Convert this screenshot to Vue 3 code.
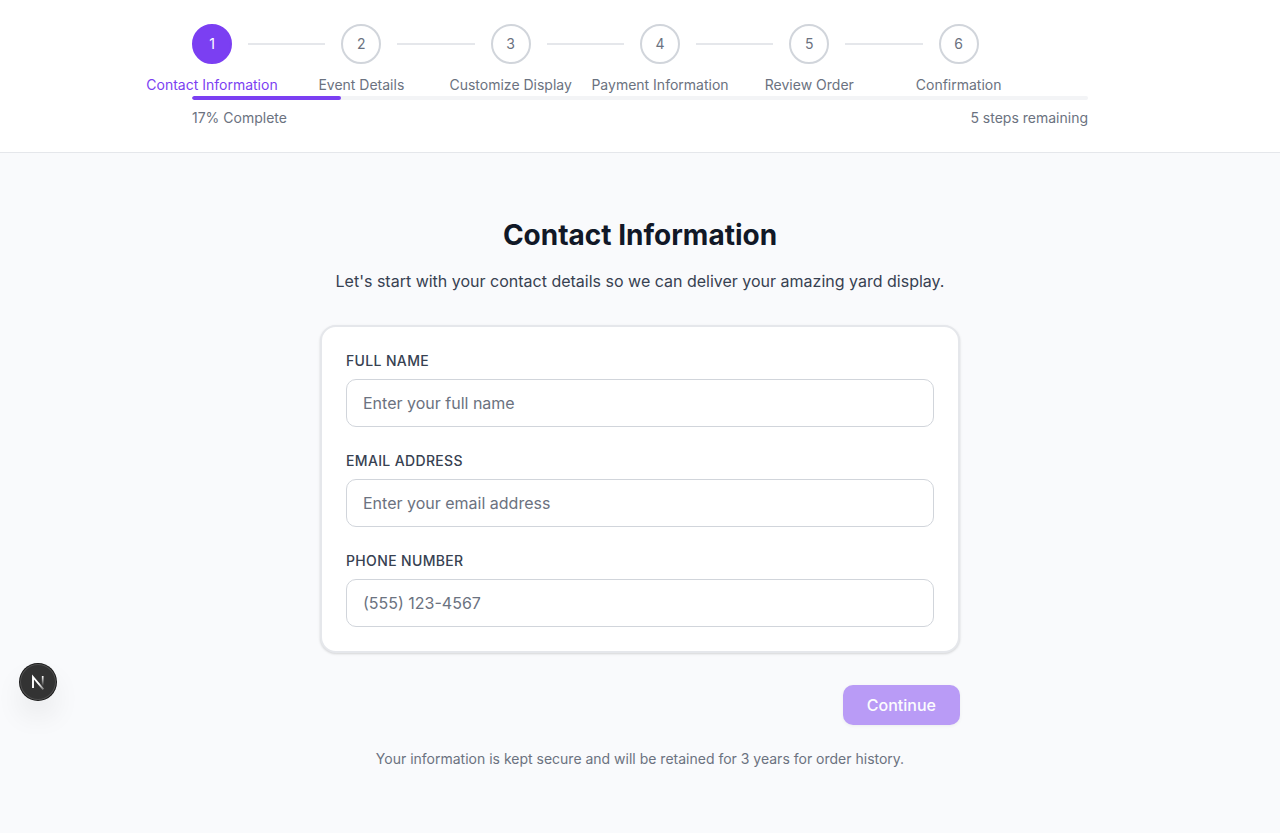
<script setup>
import { computed, reactive, ref } from 'vue'

const steps = [
  'Contact Information',
  'Event Details',
  'Customize Display',
  'Payment Information',
  'Review Order',
  'Confirmation',
]
const current = ref(1)
const progress = computed(() => Math.round((current.value / steps.length) * 100))
const barWidth = computed(() => `${(current.value / steps.length) * 100}%`)

const fields = [
  { id: 'name', label: 'Full Name', type: 'text', placeholder: 'Enter your full name' },
  { id: 'email', label: 'Email Address', type: 'email', placeholder: 'Enter your email address' },
  { id: 'phone', label: 'Phone Number', type: 'tel', placeholder: '(555) 123-4567' },
]
const form = reactive({ name: '', email: '', phone: '' })
const incomplete = computed(() => !form.name || !form.email || !form.phone)
</script>

<template>
  <div class="page">
    <header class="header">
      <div class="header-inner">
        <ol class="steps">
          <li v-for="(step, i) in steps" :key="step" class="step" :class="{ active: i + 1 === current }">
            <div class="marker">
              <span class="circle">{{ i + 1 }}</span>
              <span class="step-label">{{ step }}</span>
            </div>
            <span v-if="i < steps.length - 1" class="line"></span>
          </li>
        </ol>
        <div class="track">
          <div class="bar" :style="{ width: barWidth }"></div>
        </div>
        <div class="summary">
          <span>{{ progress }}% Complete</span>
          <span>{{ steps.length - current }} steps remaining</span>
        </div>
      </div>
    </header>

    <main class="main">
      <h1>Contact Information</h1>
      <p class="intro">Let's start with your contact details so we can deliver your amazing yard display.</p>
      <form @submit.prevent>
        <div class="card">
          <div v-for="f in fields" :key="f.id" class="field">
            <label :for="f.id">{{ f.label }}</label>
            <input :id="f.id" v-model="form[f.id]" :type="f.type" :placeholder="f.placeholder" />
          </div>
        </div>
        <div class="actions">
          <button type="submit" class="continue" :disabled="incomplete">Continue</button>
        </div>
      </form>
      <p class="note">Your information is kept secure and will be retained for 3 years for order history.</p>
    </main>

    <button type="button" class="badge" aria-label="Open developer tools">
      <svg width="36" height="36" viewBox="0 0 36 36" fill="none">
        <defs>
          <linearGradient id="diag" x1="20" y1="19" x2="25" y2="26" gradientUnits="userSpaceOnUse">
            <stop stop-color="#fff" />
            <stop offset="1" stop-color="#fff" stop-opacity="0.2" />
          </linearGradient>
          <linearGradient id="stem" x1="23" y1="12" x2="23" y2="22" gradientUnits="userSpaceOnUse">
            <stop stop-color="#fff" />
            <stop offset="1" stop-color="#fff" stop-opacity="0" />
          </linearGradient>
        </defs>
        <path d="M13 24V13L23.4 25.4" stroke="url(#diag)" stroke-width="1.9" />
        <path d="M22.7 12V22" stroke="url(#stem)" stroke-width="1.7" />
      </svg>
    </button>
  </div>
</template>

<style>
body {
  margin: 0;
  background: #f9fafb;
}
</style>

<style scoped>
.page {
  min-height: 100vh;
  background: #f9fafc;
  color: #111827;
  font-family: Inter, 'Liberation Sans', sans-serif;
  font-size: 16px;
  line-height: 24px;
}
.header {
  background: #fff;
  border-bottom: 1px solid #e5e7eb;
  padding: 24px 16px;
}
.header-inner {
  max-width: 896px;
  margin: 0 auto;
}
.steps {
  display: flex;
  list-style: none;
  margin: 0;
  padding: 0 0 2px;
}
.step {
  flex: 1;
  min-width: 0;
  display: flex;
  color: #6b7280;
  font-size: 14px;
}
.marker {
  width: 40px;
  display: flex;
  flex-direction: column;
  align-items: center;
  gap: 12px;
}
.circle {
  box-sizing: border-box;
  width: 40px;
  height: 40px;
  display: flex;
  align-items: center;
  justify-content: center;
  border: 2px solid #d1d5db;
  border-radius: 50%;
  background: #fff;
}
.step-label {
  line-height: 18px;
  white-space: nowrap;
}
.active {
  color: #7b3ff2;
}
.active .circle {
  background: #7b3ff2;
  border-color: #7b3ff2;
  color: #fff;
}
.line {
  flex: 1;
  height: 2px;
  margin: 19px 16px 0;
  background: #e5e7eb;
}
.track {
  height: 4px;
  border-radius: 4px;
  background: #f3f4f6;
  overflow: hidden;
}
.bar {
  height: 100%;
  border-radius: 4px;
  background: #7b3ff2;
}
.summary {
  display: flex;
  justify-content: space-between;
  margin-top: 8px;
  font-size: 14px;
  line-height: 20px;
  color: #6b7280;
}
.main {
  max-width: 640px;
  margin: 0 auto;
  padding: 64px 16px;
}
h1 {
  margin: 0;
  font-size: 28px;
  line-height: 36px;
  font-weight: 700;
  text-align: center;
}
.intro {
  margin: 16px 0 32px;
  text-align: center;
  color: #374151;
}
.card {
  display: flex;
  flex-direction: column;
  gap: 24px;
  padding: 24px;
  background: #fff;
  border: 2px solid #e5e7eb;
  border-radius: 16px;
  box-shadow: 0 1px 3px rgba(0, 0, 0, 0.1), 0 1px 2px rgba(0, 0, 0, 0.06);
}
.field {
  display: flex;
  flex-direction: column;
  gap: 8px;
}
label {
  font-size: 14px;
  line-height: 20px;
  font-weight: 500;
  letter-spacing: 0.025em;
  text-transform: uppercase;
  color: #374151;
}
input {
  box-sizing: border-box;
  width: 100%;
  height: 48px;
  padding: 0 16px;
  border: 1px solid #d1d5db;
  border-radius: 10px;
  background: #fff;
  color: #111827;
  font: inherit;
}
input::placeholder {
  color: #6b7280;
  opacity: 1;
}
.actions {
  display: flex;
  justify-content: flex-end;
  margin-top: 32px;
}
.continue {
  height: 40px;
  padding: 0 24px;
  border: 0;
  border-radius: 10px;
  background: #7b3ff2;
  color: #fff;
  font: inherit;
  font-weight: 500;
  box-shadow: 0 1px 3px rgba(0, 0, 0, 0.1);
}
.continue:disabled {
  opacity: 0.5;
}
.note {
  margin: 24px 0 0;
  text-align: center;
  font-size: 14px;
  line-height: 20px;
  color: #6b7280;
}
.badge {
  position: fixed;
  left: 20px;
  bottom: 133px;
  width: 36px;
  height: 36px;
  padding: 0;
  border: 0;
  border-radius: 50%;
  background: #333;
  box-shadow: 0 0 0 1px #171717, inset 0 0 0 1px rgba(255, 255, 255, 0.14),
    0 16px 32px -8px rgba(0, 0, 0, 0.24);
}
.badge svg {
  display: block;
}
</style>
